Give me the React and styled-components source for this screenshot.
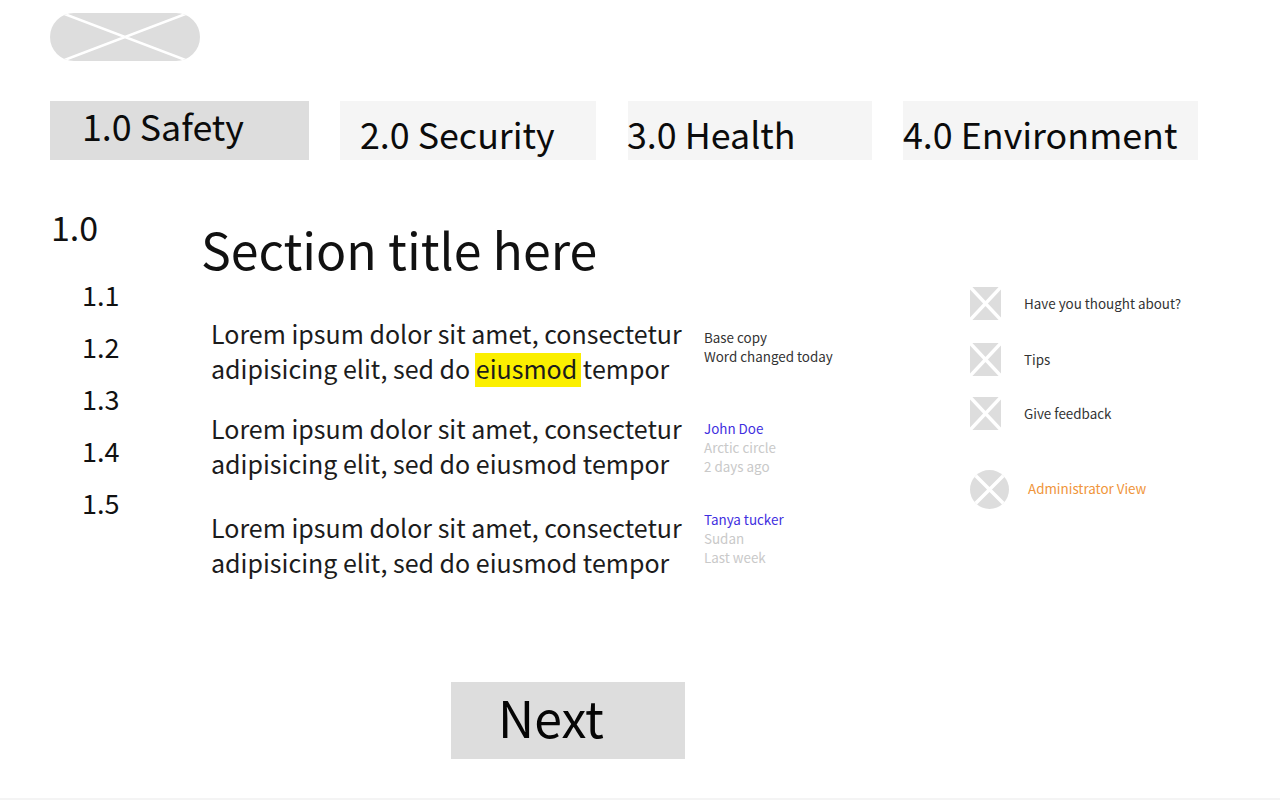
import React from 'react';
import styled, { createGlobalStyle } from 'styled-components';

const GlobalStyle = createGlobalStyle`
	html, body {
		margin: 0;
		padding: 0;
		background: #fff;
	}
	body {
		font-family: 'Noto Sans CJK SC', 'Noto Sans', sans-serif;
		color: #111;
	}
`;

const Page = styled.div`
	box-sizing: border-box;
	width: 1280px;
	height: 800px;
	padding: 13px 0 0 50px;
	overflow: hidden;
	border-bottom: 2px solid #f4f4f4;
`;

const Logo = styled.div`
	width: 150px;
	height: 48px;
	border-radius: 24px;
	overflow: hidden;
	svg {
		display: block;
	}
`;

const Tabs = styled.nav`
	display: flex;
	margin-top: 40px;
	height: 59px;
`;

const Tab = styled.div`
	box-sizing: border-box;
	width: ${(p) => p.$width}px;
	margin-right: ${(p) => p.$gap}px;
	height: 59px;
	text-indent: ${(p) => p.$pad}px;
	background: ${(p) => (p.$active ? '#dddddd' : '#f5f5f5')};
	font-size: 35.8px;
	line-height: ${(p) => (p.$active ? 48 : 64)}px;
	white-space: nowrap;
	color: #0b0b0b;
`;

const Body = styled.div`
	display: flex;
	margin-top: 47px;
`;

const SideNav = styled.ul`
	list-style: none;
	margin: 0;
	padding: 0;
	width: 150px;
	flex: none;
`;

const SideTop = styled.li`
	font-size: 34px;
	line-height: 40px;
	height: 68px;
	padding-left: 1px;
`;

const SideItem = styled.li`
	font-size: 27px;
	line-height: 40px;
	height: 51.9px;
	padding-left: 32px;
`;

const Main = styled.main`
	width: 770px;
	flex: none;
`;

const Title = styled.h1`
	margin: 0;
	padding: 8px 0 0 1px;
	font-size: 50px;
	font-weight: 400;
	line-height: 66px;
	color: #111;
`;

const Row = styled.div`
	display: flex;
	margin-top: ${(p) => p.$top}px;
`;

const Para = styled.p`
	margin: 0 0 0 11px;
	width: 493px;
	flex: none;
	font-size: 25px;
	line-height: 35px;
	color: #1c1c1c;
	white-space: nowrap;
`;

const Mark = styled.mark`
	background: linear-gradient(transparent 3px, #fbef00 3px);
	color: inherit;
	padding: 0 4px 1px 1px;
	margin: 0 -4px 0 -1px;
`;

const Note = styled.div`
	padding-top: ${(p) => p.$top}px;
	font-size: 13.4px;
	line-height: 19px;
	white-space: nowrap;
`;

const NoteLine = styled.div`
	color: ${(p) => (p.$kind === 'name' ? '#3f2fe0' : p.$kind === 'muted' ? '#c9c9c9' : '#333')};
`;

const Aside = styled.aside`
	flex: none;
	width: 260px;
	padding-top: 80px;
`;

const AsideRow = styled.div`
	display: flex;
	align-items: center;
	height: ${(p) => p.$h}px;
	margin-top: ${(p) => p.$top}px;
`;

const Thumb = styled.div`
	width: ${(p) => p.$size}px;
	height: ${(p) => p.$h || p.$size}px;
	flex: none;
	border-radius: ${(p) => (p.$round ? '50%' : 0)};
	overflow: hidden;
	svg {
		display: block;
	}
`;

const AsideText = styled.span`
	margin-left: ${(p) => p.$left}px;
	padding-bottom: ${(p) => p.$lift || 2}px;
	font-size: 13.4px;
	color: ${(p) => p.$color || '#333'};
	white-space: nowrap;
`;

const Next = styled.div`
	box-sizing: border-box;
	width: 234px;
	height: 77px;
	margin: 102px 0 0 401px;
	padding-left: 47px;
	background: #dddddd;
	font-size: 50px;
	line-height: 68px;
	color: #050505;
`;

function Crossed({ w, h, sw = 3.5, inset = 0 }) {
	return (
		<svg width={w} height={h} viewBox={`0 0 ${w} ${h}`}>
			<rect width={w} height={h} fill='#dddddd' />
			<path
				d={`M${inset} 0L${w - inset} ${h}M${w - inset} 0L${inset} ${h}`}
				stroke='#fff'
				strokeWidth={sw}
			/>
		</svg>
	);
}

const tabs = [
	{ label: '1.0 Safety', width: 259, gap: 31, pad: 32, active: true },
	{ label: '2.0 Security', width: 256, gap: 32, pad: 20 },
	{ label: '3.0 Health', width: 244, gap: 31, pad: -1 },
	{ label: '4.0 Environment', width: 295, gap: 0, pad: 0 },
];

const body = 'Lorem ipsum dolor sit amet, consectetur';

export default function App() {
	return (
		<Page>
			<GlobalStyle />
			<Logo>
				<Crossed w={150} h={48} sw={2.5} inset={12} />
			</Logo>
			<Tabs>
				{tabs.map((t) => (
					<Tab key={t.label} $width={t.width} $gap={t.gap} $pad={t.pad} $active={t.active}>
						{t.label}
					</Tab>
				))}
			</Tabs>
			<Body>
				<SideNav>
					<SideTop>1.0</SideTop>
					{['1.1', '1.2', '1.3', '1.4', '1.5'].map((n) => (
						<SideItem key={n}>{n}</SideItem>
					))}
				</SideNav>
				<Main>
					<Title>Section title here</Title>
					<Row $top={35}>
						<Para>
							{body}
							<br />
							adipisicing elit, sed do <Mark>eiusmod</Mark> tempor
						</Para>
						<Note $top={12}>
							<NoteLine>Base copy</NoteLine>
							<NoteLine>Word changed today</NoteLine>
						</Note>
					</Row>
					<Row $top={25}>
						<Para>
							{body}
							<br />
							adipisicing elit, sed do eiusmod tempor
						</Para>
						<Note $top={8}>
							<NoteLine $kind='name'>John Doe</NoteLine>
							<NoteLine $kind='muted'>Arctic circle</NoteLine>
							<NoteLine $kind='muted'>2 days ago</NoteLine>
						</Note>
					</Row>
					<Row $top={29}>
						<Para>
							{body}
							<br />
							adipisicing elit, sed do eiusmod tempor
						</Para>
						<Note $top={0}>
							<NoteLine $kind='name'>Tanya tucker</NoteLine>
							<NoteLine $kind='muted'>Sudan</NoteLine>
							<NoteLine $kind='muted'>Last week</NoteLine>
						</Note>
					</Row>
				</Main>
				<Aside>
					<AsideRow $h={33} $top={0}>
						<Thumb $size={31} $h={33}>
							<Crossed w={31} h={33} />
						</Thumb>
						<AsideText $left={23}>Have you thought about?</AsideText>
					</AsideRow>
					<AsideRow $h={33} $top={23}>
						<Thumb $size={31} $h={33}>
							<Crossed w={31} h={33} />
						</Thumb>
						<AsideText $left={23}>Tips</AsideText>
					</AsideRow>
					<AsideRow $h={33} $top={21}>
						<Thumb $size={31} $h={33}>
							<Crossed w={31} h={33} />
						</Thumb>
						<AsideText $left={23}>Give feedback</AsideText>
					</AsideRow>
					<AsideRow $h={39} $top={40}>
						<Thumb $size={39} $round>
							<Crossed w={39} h={39} />
						</Thumb>
						<AsideText $left={19} $lift={4} $color='#f0953a'>
							Administrator View
						</AsideText>
					</AsideRow>
				</Aside>
			</Body>
			<Next>Next</Next>
		</Page>
	);
}
